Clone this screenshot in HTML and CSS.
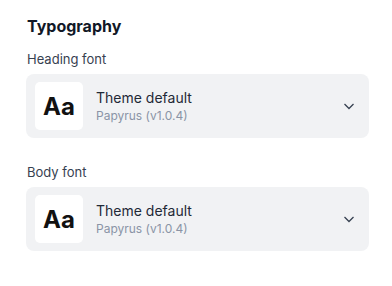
FILE: index.html
```html
<!DOCTYPE html>
<html lang="en">
<head>
    <meta charset="UTF-8">
    <title>Typography</title>
    <link rel="stylesheet" href="styles.css">
</head>
<body>
    <div class="panel">
        <h2>Typography</h2>

        <div class="field">
            <label>Heading font</label>
            <div class="select">
                <div class="preview">Aa</div>
                <div class="info">
                    <div class="name">Theme default</div>
                    <div class="meta">Papyrus (v1.0.4)</div>
                </div>
                <svg class="chevron" width="12" height="12" viewBox="0 0 12 12">
                    <path d="M1.5 4 L6 8.5 L10.5 4" fill="none" stroke="#374151" stroke-width="1.3"/>
                </svg>
            </div>
        </div>

        <div class="field">
            <label>Body font</label>
            <div class="select">
                <div class="preview">Aa</div>
                <div class="info">
                    <div class="name">Theme default</div>
                    <div class="meta">Papyrus (v1.0.4)</div>
                </div>
                <svg class="chevron" width="12" height="12" viewBox="0 0 12 12">
                    <path d="M1.5 4 L6 8.5 L10.5 4" fill="none" stroke="#374151" stroke-width="1.3"/>
                </svg>
            </div>
        </div>
    </div>
</body>
</html>
```

FILE: styles.css
```css
body {
    margin: 0;
    font-family: 'Inter', sans-serif;
    background: #fff;
    color: #111827;
}
.panel {
    padding: 16px 23px 0 26px;
}
h2 {
    font-size: 16px;
    font-weight: 700;
    margin: 0 0 15px 1px;
    line-height: 20px;
}
.field {
    margin-bottom: 26px;
}
.field label {
    display: block;
    font-size: 13px;
    color: #374151;
    line-height: 16px;
    margin-bottom: 7px;
    margin-left: 1px;
}
.select {
    display: flex;
    align-items: center;
    background: #f1f2f4;
    border-radius: 8px;
    padding: 8px 14px 8px 9px;
}
.preview {
    width: 48px;
    height: 48px;
    background: #fff;
    border-radius: 5px;
    display: flex;
    align-items: center;
    justify-content: center;
    font-size: 24px;
    font-weight: 700;
    color: #111;
}
.info {
    flex: 1;
    margin-left: 13px;
    padding-top: 1px;
}
.name {
    font-size: 14px;
    color: #1f2937;
    line-height: 18px;
}
.meta {
    font-size: 12px;
    color: #8a94a6;
    line-height: 16px;
    margin-top: 1px;
}
.chevron {
    display: block;
}
```
